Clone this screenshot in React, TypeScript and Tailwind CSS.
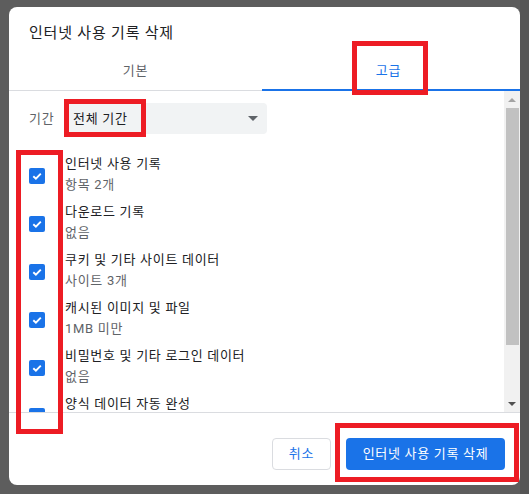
import React from "react";

const items = [
  { title: "인터넷 사용 기록", sub: "항목 2개" },
  { title: "다운로드 기록", sub: "없음" },
  { title: "쿠키 및 기타 사이트 데이터", sub: "사이트 3개" },
  { title: "캐시된 이미지 및 파일", sub: "1MB 미만" },
  { title: "비밀번호 및 기타 로그인 데이터", sub: "없음" },
  { title: "양식 데이터 자동 완성", sub: "" },
];

function Checkbox() {
  return (
    <div className="w-4 h-4 rounded-[2px] bg-[#1a73e8] flex items-center justify-center shrink-0">
      <svg width="12" height="12" viewBox="0 0 12 12">
        <path d="M2.3 6.2 L4.9 8.7 L9.8 3.6" fill="none" stroke="white" strokeWidth="1.9" />
      </svg>
    </div>
  );
}

export default function App() {
  return (
    <div className="relative w-[529px] h-[494px] overflow-hidden bg-[#5d5d5d] font-['Roboto','Noto_Sans_CJK_KR',sans-serif] tracking-[0.7px]">
      <div className="flex h-full">
        <div className="pt-[7px] pl-[9px]">
          {/* dialog */}
          <div className="w-[511px] h-[478px] bg-white rounded-lg flex flex-col overflow-hidden">
            <div className="pt-4 px-5 h-[45px] text-[15px] leading-5 text-[#202124] tracking-[0.8px]">인터넷 사용 기록 삭제</div>

            {/* tabs */}
            <div className="flex h-[39px] border-b border-[#dadce0] text-[13px]">
              <div className="w-[253px] flex items-center justify-center text-[#5f6368]">기본</div>
              <div className="flex-1 flex flex-col">
                <div className="flex-1 flex items-center justify-center text-[#1a73e8] pr-[5px]">고급</div>
                <div className="h-[2px] bg-[#1a73e8] -mb-px"></div>
              </div>
            </div>

            {/* content */}
            <div className="h-[321px] flex">
              <div className="flex-1 overflow-hidden pt-3 pl-5">
                <div className="flex items-center h-[31px]">
                  <span className="w-[35px] text-[13px] text-[#5f6368]">기간</span>
                  <div className="w-[203px] h-[31px] rounded bg-[#f1f3f4] flex items-center justify-between pl-[9px] pr-[9px] text-[13px] text-[#202124]">
                    <span>전체 기간</span>
                    <svg width="10" height="5" viewBox="0 0 10 5">
                      <path d="M0 0 H10 L5 5 Z" fill="#5f6368" />
                    </svg>
                  </div>
                </div>
                <div className="mt-[18px] flex flex-col">
                  {items.map((it) => (
                    <div key={it.title} className="h-12 flex items-center gap-5 shrink-0">
                      <Checkbox />
                      <div className="flex flex-col text-[13px] leading-5 -mt-[3px]">
                        <span className="text-[#202124]">{it.title}</span>
                        <span className="text-[#5f6368] mt-px">{it.sub || "\u00a0"}</span>
                      </div>
                    </div>
                  ))}
                </div>
              </div>
              {/* scrollbar */}
              <div className="w-4 bg-[#f1f1f1] flex flex-col items-end">
                <div className="w-full h-[17px] flex items-center justify-center">
                  <svg width="8" height="4" viewBox="0 0 8 4">
                    <path d="M0 4 L4 0 L8 4 Z" fill="#a3a3a3" />
                  </svg>
                </div>
                <div className="w-[13px] mr-px h-[237px] bg-[#c1c1c1]"></div>
                <div className="flex-1"></div>
                <div className="w-full h-[17px] flex items-center justify-center">
                  <svg width="8" height="4" viewBox="0 0 8 4">
                    <path d="M0 0 L8 0 L4 4 Z" fill="#505050" />
                  </svg>
                </div>
              </div>
            </div>

            {/* footer */}
            <div className="flex-1 border-t border-[#dadce0] flex justify-end items-start gap-[15px] pt-[25px] pr-[15px]">
              <button className="w-[59px] h-8 rounded border border-[#dadce0] bg-white text-[13px] text-[#1a73e8]">취소</button>
              <button className="w-[159px] h-8 rounded bg-[#1a73e8] text-[13px] text-white">인터넷 사용 기록 삭제</button>
            </div>
          </div>
        </div>
        <div className="flex-1 bg-[#555555]"></div>
      </div>

      {/* red annotation boxes */}
      <div className="absolute left-[352px] top-[41px] w-[76px] h-[54px] border-[5px] border-[#ed1c24]"></div>
      <div className="absolute left-[64px] top-[99px] w-[82px] h-[38px] border-[5px] border-[#ed1c24]"></div>
      <div className="absolute left-[16px] top-[150px] w-[47px] h-[284px] border-[5px] border-[#ed1c24]"></div>
      <div className="absolute left-[335px] top-[423px] w-[184px] h-[59px] border-[5px] border-[#ed1c24]"></div>
    </div>
  );
}
